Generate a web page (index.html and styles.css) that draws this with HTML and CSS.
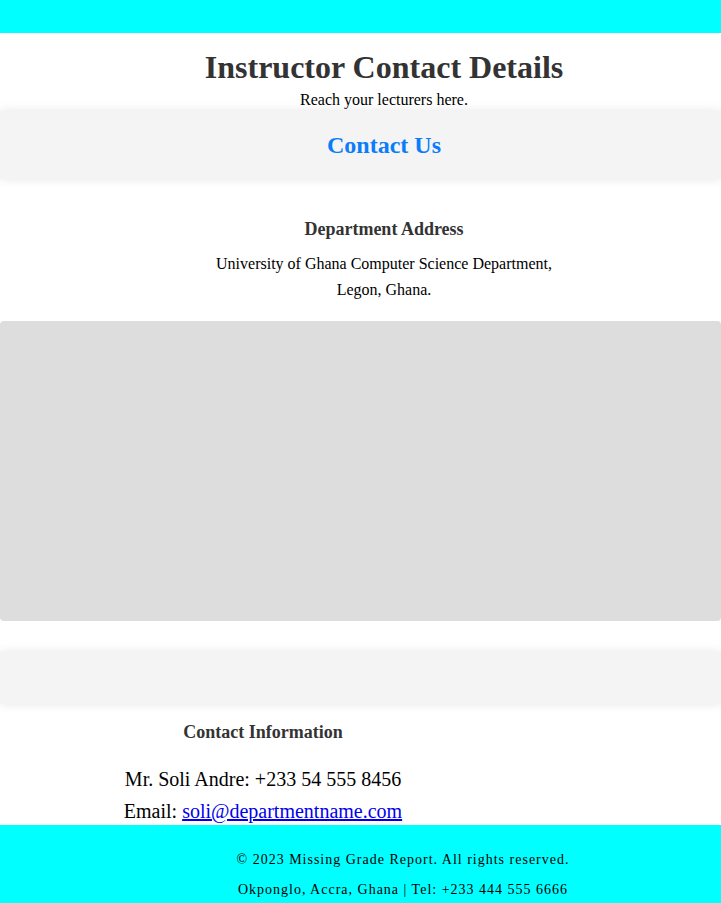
FILE: index.html
```html
<!DOCTYPE html>
<html lang="en">
<head>
<meta charset="utf-8">
<title>Instructor Contact Details</title>
<link rel="stylesheet" href="styles.css">
</head>
<body>
<div class="topbar"></div>
<header class="page-header">
  <h1>Instructor Contact Details</h1>
  <p>Reach your lecturers here.</p>
</header>
<section class="banner">
  <h2>Contact Us</h2>
</section>
<section class="address">
  <h3>Department Address</h3>
  <p>University of Ghana Computer Science Department,<br>Legon, Ghana.</p>
</section>
<div class="map"></div>
<section class="banner banner-empty"></section>
<section class="contact-info">
  <div class="contact-card">
    <h3>Contact Information</h3>
    <p>Mr. Soli Andre: +233 54 555 8456</p>
    <p class="last">Email: <a href="#">soli@departmentname.com</a></p>
  </div>
</section>
<footer class="site-footer">
  <p>&copy; 2023 Missing Grade Report. All rights reserved.</p>
  <p>Okponglo, Accra, Ghana | Tel: +233 444 555 6666</p>
</footer>
</body>
</html>
```
FILE: styles.css
```css
html, body {
  margin: 0;
  padding: 0;
}
body {
  font-family: "Liberation Serif", "Times New Roman", serif;
  color: #000;
  background: #fff;
}
.topbar {
  height: 33px;
  background: #00ffff;
}
.page-header {
  padding: 16px 0 2px 47px;
  text-align: center;
}
.page-header h1 {
  margin: 0 0 5px;
  font-size: 32px;
  line-height: 37px;
  color: #333;
}
.page-header p {
  margin: 0;
  font-size: 16px;
  line-height: 18px;
}
.banner {
  background: #f4f4f4;
  padding: 20px 0 20px 47px;
  text-align: center;
  box-shadow: 0 0 10px rgba(0, 0, 0, 0.1);
  position: relative;
}
.banner h2 {
  margin: 0;
  font-size: 24px;
  line-height: 28px;
  color: #0b7dfb;
}
.address {
  padding: 39px 0 18px 47px;
  text-align: center;
}
.address h3 {
  margin: 0 0 11px;
  font-size: 18px;
  line-height: 22px;
  color: #333;
}
.address p {
  margin: 0;
  font-size: 16px;
  line-height: 26px;
}
.map {
  height: 300px;
  background: #dddddd;
  border-radius: 4px;
  margin-bottom: 31px;
}
.banner-empty {
  height: 12px;
}
.contact-info {
  padding: 17px 0 0 47px;
}
.contact-card {
  width: 432px;
  text-align: center;
}
.contact-card h3 {
  margin: 0 0 20px;
  font-size: 18px;
  line-height: 22px;
  color: #333;
}
.contact-card p {
  margin: 0;
  font-size: 20px;
  line-height: 32px;
}
.contact-card p.last {
  margin-bottom: -2px;
}
.contact-card a {
  color: #0000ee;
}
.site-footer {
  background: #00ffff;
  padding: 13px 0 10px 85px;
  text-align: center;
  letter-spacing: 1px;
  font-size: 14px;
}
.site-footer p {
  margin: 14px 0;
  line-height: 16px;
}
```
